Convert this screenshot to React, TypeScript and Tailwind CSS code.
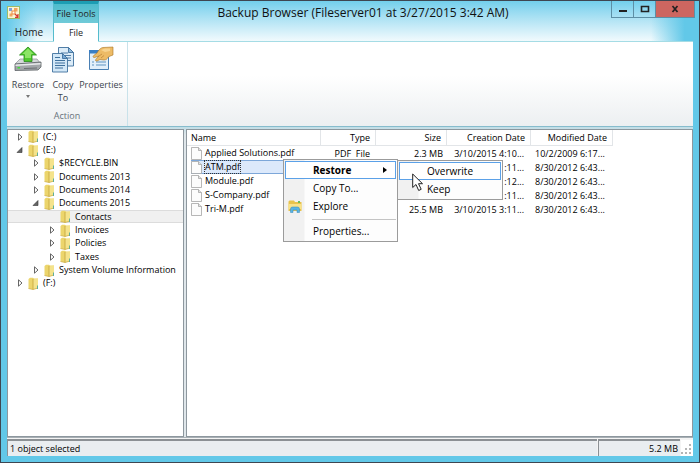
import { useState, type ReactNode } from "react";
import clsx from "clsx";

type TreeNode = {
  label: string;
  level: 0 | 1 | 2;
  state: "collapsed" | "expanded" | "leaf";
};

type FileRow = {
  name: string;
  type?: string;
  size?: string;
  created: string;
  modified: string;
};

const nodes: TreeNode[] = [
  { label: "(C:)", level: 0, state: "collapsed" },
  { label: "(E:)", level: 0, state: "expanded" },
  { label: "$RECYCLE.BIN", level: 1, state: "collapsed" },
  { label: "Documents 2013", level: 1, state: "collapsed" },
  { label: "Documents 2014", level: 1, state: "collapsed" },
  { label: "Documents 2015", level: 1, state: "expanded" },
  { label: "Contacts", level: 2, state: "leaf" },
  { label: "Invoices", level: 2, state: "collapsed" },
  { label: "Policies", level: 2, state: "collapsed" },
  { label: "Taxes", level: 2, state: "collapsed" },
  { label: "System Volume Information", level: 1, state: "collapsed" },
  { label: "(F:)", level: 0, state: "collapsed" },
];

const files: FileRow[] = [
  { name: "Applied Solutions.pdf", type: "PDF  File", size: "2.3 MB", created: "3/10/2015 4:10...", modified: "10/2/2009 6:17..." },
  { name: "ATM.pdf", created: ":11...", modified: "8/30/2012 6:43..." },
  { name: "Module.pdf", created: ":12...", modified: "8/30/2012 6:43..." },
  { name: "S-Company.pdf", created: ":11...", modified: "8/30/2012 6:43..." },
  { name: "Tri-M.pdf", size: "25.5 MB", created: "3/10/2015 3:11...", modified: "8/30/2012 6:43..." },
];

const indent = { 0: "pl-2", 1: "pl-6", 2: "pl-10" };

export default function App() {
  return (
    <div className="flex min-h-screen flex-col border border-[#3e4651] bg-[#62c8e8] font-['Open_Sans',sans-serif] text-[9px] text-[#222]">
      <TitleBar />
      <main className="mx-1.5 mb-1.5 flex flex-1 flex-col bg-[#dfe6ea]">
        <Ribbon />
        <div className="flex flex-1 gap-0.5 border-t border-[#86bccd] bg-linear-to-b from-[#c0dde6] to-[#dfe6ea] to-[8px] pt-0.5">
          <FolderTree />
          <FileList />
        </div>
        <StatusBar />
      </main>
    </div>
  );
}

function TitleBar() {
  return (
    <header className="relative flex h-10 bg-linear-to-b from-[#72cfec] to-[#f1fafd]">
      <div className="absolute inset-y-0 left-0 w-9 bg-linear-to-r from-[#66caea] from-15% to-transparent" />
      <div className="absolute inset-y-0 right-0 w-12 bg-linear-to-l from-[#62c8e8] from-30% to-transparent" />
      <div className="relative flex w-[52px] flex-col justify-between pl-1.5">
        <AppIcon />
        <button type="button" className="h-[18px] w-11 text-center text-[10px] leading-[18px]">
          Home
        </button>
      </div>
      <div className="relative flex w-[46px] flex-col border-x border-t-3 border-x-[#55bccd] border-t-[#1d9db3] bg-linear-to-b from-[#4dbccd] to-[#8ed8e2] text-center">
        <span className="h-[19px] leading-[19px] whitespace-nowrap">File Tools</span>
        <button type="button" className="-mb-px flex-1 bg-white leading-[18px]">
          File
        </button>
      </div>
      <h1 className="relative flex-1 pt-0.5 pl-4 text-center text-[12px] leading-5 text-[#111]">
        Backup Browser (Fileserver01 at 3/27/2015 3:42 AM)
      </h1>
      <div className="relative mr-1 flex h-[17px]">
        <WindowButton label="Minimize" className="w-[23px] border-l">
          <path d="M2 7h8v2H2z" fill="#222" />
        </WindowButton>
        <WindowButton label="Maximize" className="w-[22px]">
          <path d="M2.500 3.500h7v5h-7z" fill="none" stroke="#222" strokeWidth="1.600" />
        </WindowButton>
        <WindowButton label="Close" className="w-[39px] bg-[#cd6660]">
          <path d="M3.500 3l5 6M8.500 3l-5 6" stroke="#222" strokeWidth="1.700" />
        </WindowButton>
      </div>
    </header>
  );
}

function WindowButton({ label, className, children }: { label: string; className: string; children: ReactNode }) {
  return (
    <button
      type="button"
      aria-label={label}
      className={clsx("flex items-center justify-center border-r border-b border-[#5d8fa5]", className)}
    >
      <svg viewBox="0 0 12 12" className="size-3">
        {children}
      </svg>
    </button>
  );
}

function Ribbon() {
  return (
    <section className="flex h-[85px] border-t border-[#a5dce5] bg-linear-to-b from-white from-40% to-[#eceff1]">
      <div className="flex w-[121px] flex-col border-r border-[#c9e2ea]">
        <div className="flex flex-1 pt-1">
          <RibbonButton label="Restore" className="w-[42px]" icon={<RestoreIcon />}>
            <span className="mt-1 border-x-2 border-t-3 border-x-transparent border-t-[#777]" />
          </RibbonButton>
          <RibbonButton label="Copy" className="w-7" icon={<CopyIcon />}>
            <span>To</span>
          </RibbonButton>
          <RibbonButton label="Properties" className="w-12" icon={<PropertiesIcon />} />
        </div>
        <div className="h-[17px] text-center text-[#68727c]">Action</div>
      </div>
    </section>
  );
}

type RibbonButtonProps = {
  label: string;
  className: string;
  icon: ReactNode;
  children?: ReactNode;
};

function RibbonButton({ label, className, icon, children }: RibbonButtonProps) {
  return (
    <button type="button" className={clsx("flex flex-col items-center leading-[13px] text-[#3c444c]", className)}>
      <span className="mb-1 h-7">{icon}</span>
      <span>{label}</span>
      {children}
    </button>
  );
}

function FolderTree() {
  const [selected, setSelected] = useState("Contacts");

  return (
    <nav className="w-[177px] shrink-0 border border-[#8d979e] bg-white">
      <ul role="tree" className="grid h-40 auto-rows-fr">
        {nodes.map((node) => (
          <li key={node.label} role="treeitem" aria-selected={node.label === selected} className="flex">
            <button
              type="button"
              onClick={() => setSelected(node.label)}
              className={clsx(
                "flex w-full items-center border-y text-left leading-3 whitespace-nowrap text-black",
                indent[node.level],
                node.label === selected ? "border-[#dcdcdc] bg-[#f0f0f0]" : "border-transparent",
              )}
            >
              <span className="w-3">
                {node.state !== "leaf" && <Expander open={node.state === "expanded"} />}
              </span>
              <FolderIcon />
              <span className="pl-1">{node.label}</span>
            </button>
          </li>
        ))}
      </ul>
    </nav>
  );
}

function FileList() {
  const head = "border-r border-b border-[#e2e5e8] pr-[5px] text-right font-normal";

  return (
    <section className="relative min-w-0 flex-1 border border-[#8d979e] bg-white">
      <table className="table-fixed border-separate border-spacing-0 leading-[13px] whitespace-nowrap text-black">
        <colgroup>
          <col className="w-[134px]" />
          <col className="w-[55px]" />
          <col className="w-[71px]" />
          <col className="w-[84px]" />
          <col className="w-[82px]" />
        </colgroup>
        <thead>
          <tr className="h-4">
            <th className="border-r border-b border-[#e2e5e8] pl-1 text-left font-normal">Name</th>
            <th className={head}>Type</th>
            <th className={head}>Size</th>
            <th className={head}>Creation Date</th>
            <th className={head}>Modified Date</th>
          </tr>
        </thead>
        <tbody>
          {files.map((file) => {
            const active = file.name === "ATM.pdf";
            return (
              <tr key={file.name} className="h-3.5">
                <td className="pl-1">
                  <div
                    className={clsx(
                      "flex h-3.5 items-center border-y",
                      active ? "border-[#7da7d9] bg-[#dce9fb]" : "border-transparent",
                    )}
                  >
                    <PageIcon />
                    <span
                      className={clsx(
                        "ml-0.5 border border-dotted leading-3",
                        active ? "border-[#333]" : "border-transparent",
                      )}
                    >
                      {file.name}
                    </span>
                  </div>
                </td>
                <td className="pr-1.5 text-right whitespace-pre">{file.type}</td>
                <td className="pr-1 text-right">{file.size}</td>
                <td className="pr-[7px] text-right">{file.created}</td>
                <td className="pl-1">{file.modified}</td>
              </tr>
            );
          })}
        </tbody>
      </table>
      <ContextMenu />
    </section>
  );
}

function ContextMenu() {
  const panel =
    "border border-[#9b9b9b] bg-linear-to-r from-[#f1f1f1] from-[20px] to-[#fdfdfd] to-[21px] p-px";

  return (
    <div className="absolute top-[29px] left-[96px] flex items-start">
      <div role="menu" className={clsx(panel, "w-[115px]")}>
        <MenuItem className="border-[#5ba1e8] bg-white font-bold">
          <span className="flex-1 pl-[27px]">Restore</span>
          <span className="mr-2 border-y-3 border-l-4 border-y-transparent border-l-black" />
        </MenuItem>
        <MenuItem className="border-transparent">
          <span className="pl-[27px]">Copy To...</span>
        </MenuItem>
        <MenuItem className="border-transparent">
          <span className="flex w-[27px] pl-0.5">
            <ExplorerIcon />
          </span>
          <span>Explore</span>
        </MenuItem>
        <div className="mt-1 mb-0.5 ml-[27px] border-t border-[#c4c4c4]" />
        <MenuItem className="border-transparent">
          <span className="pl-[27px]">Properties...</span>
        </MenuItem>
      </div>
      <div role="menu" className={clsx(panel, "mt-px -ml-px w-[106px]")}>
        <MenuItem className="border-[#5ba1e8] bg-white">
          <span className="pl-[27px]">Overwrite</span>
        </MenuItem>
        <MenuItem className="border-transparent">
          <span className="pl-[27px]">Keep</span>
        </MenuItem>
      </div>
      <svg viewBox="0 0 12 19" className="absolute top-[14px] left-[129px] h-[19px] w-3">
        <path d="M.7 1v13.500l3.300-3 2.700 6 2.500-1.200-2.700-5.600h4z" fill="#fff" stroke="#222" />
      </svg>
    </div>
  );
}

function MenuItem({ className, children }: { className: string; children: ReactNode }) {
  return (
    <button
      type="button"
      role="menuitem"
      className={clsx("flex h-[18px] w-full items-center border text-left text-[10px] leading-4 text-black", className)}
    >
      {children}
    </button>
  );
}

function StatusBar() {
  const cell = "border-t-2 border-l border-[#8b9094] bg-[#e9edf0] px-0.5 leading-[15px]";

  return (
    <footer className="flex h-[19px] gap-px border-t border-[#a8b0b5] bg-[#f4f4f4] pt-px text-black">
      <div className={clsx(cell, "flex-1")}>1 object selected</div>
      <div className={clsx(cell, "w-[82px] text-right")}>5.2 MB</div>
      <svg viewBox="0 0 12 16" className="mt-px h-4 w-3 bg-white" fill="#b5b5b5">
        <path d="M8 4h2v2H8zM8 8h2v2H8zM4 8h2v2H4zM8 12h2v2H8zM4 12h2v2H4zM0 12h2v2H0z" />
      </svg>
    </footer>
  );
}

function AppIcon() {
  return (
    <svg viewBox="0 0 13 13" className="mt-[5px] size-[13px]">
      <rect x=".5" y=".5" width="12" height="12" fill="#fbf6d6" stroke="#9dbb6a" />
      <path d="M2 2h3v3H2z" fill="#7fa0dc" />
      <path d="M7 2h3.500v3.500H7z" fill="#f3a560" />
      <path d="M2.500 7.500h3v3h-3z" fill="#f3a560" />
      <path d="M4.500 4.500h4v4h-4z" fill="#ee8a3e" />
      <path d="M8 8l3 3M11 8v3.300H8" stroke="#d33a30" strokeWidth="1.200" fill="none" />
      <path d="M5.500 5.500h2v2h-2z" fill="#fff" />
    </svg>
  );
}

function RestoreIcon() {
  return (
    <svg viewBox="0 0 28 26" className="h-[26px] w-7">
      <path d="M6 13h17l4 5H1z" fill="#d5d8da" stroke="#8a8f93" strokeWidth=".7" />
      <path d="M1 18l26-2v5l-3 3-23 .5z" fill="#a3a7aa" stroke="#5d6266" strokeWidth=".8" />
      <path d="M1.500 18.500l25-1.500v1.500l-25 1.500z" fill="#e8eaeb" />
      <path d="M3.500 21H6v1.500H3.500z" fill="#42dd3b" />
      <path d="M10 22.500l13-.5" stroke="#6a6e71" />
      <path d="M14 1l8.500 8H18v6.500h-8V9H5.500z" fill="#50c82e" stroke="#268a16" strokeWidth=".8" />
      <path d="M14 2.500l5.500 5.500H17v4h-6V8H8.500z" fill="#8ce466" />
    </svg>
  );
}

function CopyIcon() {
  return (
    <svg viewBox="0 0 24 27" className="h-[27px] w-6">
      <g stroke="#3f719d" strokeWidth=".9">
        <path d="M7.500 1.500h10l5 5V20h-15z" fill="#dcecf8" />
        <path d="M17.500 1.500v5h5z" fill="#8fb9dc" />
        <path d="M10 7h7M10 9.500h10M10 12h10M10 14.500h10" />
        <path d="M1.500 7.500h10l5 5V26h-15z" fill="#d2e7f7" />
        <path d="M11.500 7.500v5h5z" fill="#75a8d4" />
        <path d="M4 11.500h5M4 14.500h10M4 17h10M4 19.500h10M4 22h8" strokeWidth="1.200" />
      </g>
    </svg>
  );
}

function PropertiesIcon() {
  return (
    <svg viewBox="0 0 26 25" className="h-[25px] w-[26px]">
      <path d="M1.500 5h19v18.500h-19z" fill="#e2effa" stroke="#4a80b4" />
      <path d="M1 4h20v3.500H1z" fill="#3a7fc5" />
      <path d="M4 16h2M4 19h2M8 16h10M8 19h10" stroke="#5f93bf" strokeWidth="1.200" />
      <path
        d="M25 1v8l-4 1.500c-2 2.500-3 3.500-5 3.500l-4-.5-3 1.500c-1.500.3-2-.8-1-1.800L11 10 6.500 11.500c-1.500.2-2-1-.8-2L9 7c1.500-3 4-5.500 6-5.500z"
        fill="#edbb66"
        stroke="#a97423"
        strokeWidth=".6"
      />
      <path d="M11 10l3-2M13 12l3-2.500" stroke="#b98132" strokeWidth=".7" />
      <path d="M13 4l4-1.500h5V5l-5 1z" fill="#f7d38f" />
    </svg>
  );
}

function Expander({ open }: { open: boolean }) {
  return (
    <svg viewBox="0 0 8 8" className="size-2">
      {open ? (
        <path d="M6 1.500V6.500H1z" fill="#666" stroke="#333" strokeWidth=".6" />
      ) : (
        <path d="M2.500 .8L6 4 2.500 7.200z" fill="#fff" stroke="#555" strokeWidth=".9" />
      )}
    </svg>
  );
}

function FolderIcon() {
  return (
    <svg viewBox="0 0 11 13" className="h-[13px] w-[11px] shrink-0">
      <path d="M.5 2L2 .8h3l1 .8h4V11l-5 1.500-4.500-1z" fill="#ecd56c" />
      <path d="M5 2.500L10 1.500V11L5 12.500z" fill="#f4e38c" />
      <path d="M5 2v10.500" stroke="#c4a33a" strokeWidth=".8" />
      <path d="M.5 11.500l4.500 1 5-1.500" stroke="#c9ab45" strokeWidth=".7" fill="none" />
      <path d="M9.500 8.500v3.500" stroke="#5fae9b" />
    </svg>
  );
}

function PageIcon() {
  return (
    <svg viewBox="0 0 11 13" className="h-[13px] w-[11px] shrink-0">
      <path d="M.5.5h7l3 3v9H.5z" fill="#fcfcfc" stroke="#a5a5a5" strokeWidth=".8" />
      <path d="M7.500.5v3h3" fill="#e2e2e2" stroke="#a5a5a5" strokeWidth=".8" />
    </svg>
  );
}

function ExplorerIcon() {
  return (
    <svg viewBox="0 0 14 13" className="h-[13px] w-3.5">
      <path d="M.5 1.500l1-1H6l1 1.500h6.500V11H.5z" fill="#e8c34d" />
      <path d="M.5 4h13v5H.500z" fill="#f8e28a" />
      <path d="M2.500 12.500V9q0-2 2-2h5q2 0 2 2v3.500H9V10H5v2.500z" fill="#58b4e4" stroke="#3389bd" strokeWidth=".5" />
      <path d="M10 1h2v2h-2z" fill="#6dbb59" />
    </svg>
  );
}
